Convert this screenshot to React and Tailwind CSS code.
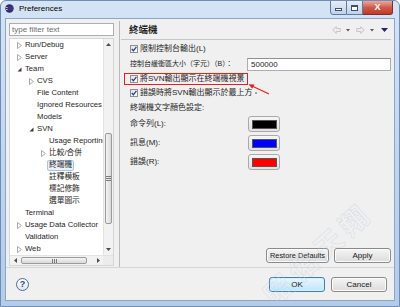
import React from "react";

const font = "font-['Liberation_Sans','Noto_Sans_CJK_TC',sans-serif]";

const tree = [
    { label: "Run/Debug", level: 0, arrow: "closed" },
    { label: "Server", level: 0, arrow: "closed" },
    { label: "Team", level: 0, arrow: "open" },
    { label: "CVS", level: 1, arrow: "closed" },
    { label: "File Content", level: 1 },
    { label: "Ignored Resources", level: 1 },
    { label: "Models", level: 1 },
    { label: "SVN", level: 1, arrow: "open" },
    { label: "Usage Reporting", level: 2 },
    { label: "比較/合併", level: 2, arrow: "closed" },
    { label: "終端機", level: 2, selected: true },
    { label: "註釋模板", level: 2 },
    { label: "標記修飾", level: 2 },
    { label: "選單圖示", level: 2 },
    { label: "Terminal", level: 0 },
    { label: "Usage Data Collector", level: 0, arrow: "closed" },
    { label: "Validation", level: 0 },
    { label: "Web", level: 0, arrow: "closed" }
];

const indent = ["pl-[7px]", "pl-[19px]", "pl-[31px]"];

function Arrow({ type }) {
    if (type === "closed") {
        return (
            <svg width="5" height="7" viewBox="0 0 5 7">
                <path d="M0.5 0.5 L4.5 3.5 L0.5 6.5 Z" fill="none" stroke="#a9a9a9" strokeWidth="1" />
            </svg>
        );
    }
    if (type === "open") {
        return (
            <svg width="5" height="5" viewBox="0 0 5 5">
                <path d="M4.5 0.5 L4.5 4.5 L0.5 4.5 Z" fill="#3a3a3a" />
            </svg>
        );
    }
    return null;
}

function Checkbox() {
    return (
        <span className="flex h-[8px] w-[8px] shrink-0 items-center justify-center border border-[#8e8f8f] bg-gradient-to-br from-[#e4e4e4] to-[#fbfbfb]">
            <svg width="6" height="6" viewBox="0 0 6 6">
                <path d="M0.8 3 L2.4 4.8 L5.4 0.8" fill="none" stroke="#21428a" strokeWidth="1.3" />
            </svg>
        </span>
    );
}

function WinButton({ children, primary }) {
    return (
        <div
            className={`flex h-[15px] items-center justify-center whitespace-nowrap rounded-[3px] border text-[#1a1a1a] ${
                primary
                    ? "border-[#3c7fb1] bg-gradient-to-b from-[#eaf6fd] to-[#bee6fd] shadow-[inset_0_0_0_1px_#d9f0fc]"
                    : "border-[#8a8a8a] bg-gradient-to-b from-[#f5f5f5] to-[#dcdcdc] shadow-[inset_0_0_0_1px_#fcfcfc]"
            }`}
        >
            {children}
        </div>
    );
}

function ColorButton({ swatch }) {
    return (
        <div className="flex h-[16px] w-[32px] items-center justify-center rounded-[3px] border border-[#a9a9a9] bg-gradient-to-b from-[#f6f6f6] to-[#e1e1e1]">
            <div className={`h-[9px] w-[25px] border border-[#555] ${swatch}`} />
        </div>
    );
}

function TreeRow({ item }) {
    return (
        <div className={`flex h-[12px] items-center whitespace-nowrap ${indent[item.level]}`}>
            <span className="flex w-[8px] shrink-0 items-center">
                <Arrow type={item.arrow} />
            </span>
            {item.selected ? (
                <span className="-ml-[2px] flex h-[11px] items-center rounded-[2px] border border-[#a6c3e4] bg-[#eaf2fb] px-[1px]">
                    {item.label}
                </span>
            ) : (
                <span>{item.label}</span>
            )}
        </div>
    );
}

function App() {
    return (
        <div className={`relative flex h-[307px] w-[400px] flex-col overflow-hidden rounded-t-[6px] border border-[#6f8db4] bg-gradient-to-b from-[#d4e4f5] via-[#c2d6ee] to-[#b4cce8] ${font}`}>

            {/* title bar */}
            <div className="flex h-[17px] shrink-0 items-start">
                <svg className="ml-[4px] mt-[3px]" width="9" height="9" viewBox="0 0 9 9">
                    <circle cx="4.5" cy="4.5" r="4.2" fill="#2f2a63" />
                    <rect x="1" y="3" width="7" height="0.8" fill="#e8e6f5" />
                    <rect x="1" y="5" width="7" height="0.8" fill="#e8e6f5" />
                    <circle cx="5.3" cy="4.5" r="2.8" fill="#3b347a" />
                </svg>
                <span className="ml-[5px] mt-[3px] text-[8px] leading-[10px] text-black">Preferences</span>
                <div className="-mt-[1px] ml-auto mr-[6px] flex h-[15px]">
                    <div className="flex w-[17px] items-end justify-center rounded-bl-[3px] border border-[#5d7aa2] bg-gradient-to-b from-[#e6eef8] to-[#bfd2ea] pb-[3px]">
                        <div className="h-[3px] w-[7px] border border-[#3c4f6c] bg-white" />
                    </div>
                    <div className="flex w-[16px] items-center justify-center border-y border-r border-[#5d7aa2] bg-gradient-to-b from-[#e6eef8] to-[#bfd2ea]">
                        <div className="h-[6px] w-[7px] border border-[#3c4f6c] border-t-2 bg-white" />
                    </div>
                    <div className="flex w-[30px] items-center justify-center rounded-br-[3px] border-y border-r border-[#7a2f2a] bg-gradient-to-b from-[#e9a99c] via-[#d05a48] to-[#c0392b] text-[9px] font-bold leading-none text-white">
                        X
                    </div>
                </div>
            </div>

            {/* client area */}
            <div className="mx-[4px] mb-[5px] flex flex-1 flex-col border border-[#8aa6c9] bg-[#f0f0f0] text-[8px] text-[#1e1e1e]">

                <div className="flex h-[248px] shrink-0">

                    {/* left column */}
                    <div className="flex w-[108px] shrink-0 flex-col pb-[2px] pl-[3px] pt-[4px]">
                        <div className="flex h-[13px] items-center border border-[#abadb3] bg-white pl-[2px] text-[8px] text-[#6d6d6d]">
                            type filter text
                        </div>
                        <div className="mt-[2px] flex flex-1 flex-col border border-[#d6d6d6] bg-white">
                            <div className="flex flex-1">
                                <div className="flex-1 overflow-hidden text-[7.7px] text-[#1e1e1e]">
                                    {tree.map((item) => (
                                        <TreeRow key={item.label} item={item} />
                                    ))}
                                </div>
                                <div className="flex w-[10px] flex-col border-l border-[#e3e3e3] bg-[#f2f2f2]">
                                    <div className="flex h-[11px] items-center justify-center">
                                        <svg width="5" height="3" viewBox="0 0 5 3"><path d="M0 3 L2.5 0 L5 3 Z" fill="#4d4d4d" /></svg>
                                    </div>
                                    <div className="h-[83px]" />
                                    <div className="mx-[1px] flex h-[91px] items-center justify-center rounded-[2px] border border-[#9a9a9a] bg-gradient-to-r from-[#f4f4f4] to-[#d9d9d9]">
                                        <div className="flex flex-col gap-[1px]">
                                            <div className="h-[1px] w-[5px] bg-[#7a7a7a]" />
                                            <div className="h-[1px] w-[5px] bg-[#7a7a7a]" />
                                            <div className="h-[1px] w-[5px] bg-[#7a7a7a]" />
                                        </div>
                                    </div>
                                    <div className="flex-1" />
                                    <div className="flex h-[11px] items-center justify-center">
                                        <svg width="5" height="3" viewBox="0 0 5 3"><path d="M0 0 L2.5 3 L5 0 Z" fill="#4d4d4d" /></svg>
                                    </div>
                                </div>
                            </div>
                            <div className="flex h-[10px] border-t border-[#e3e3e3] bg-[#f2f2f2]">
                                <div className="flex w-[10px] items-center justify-center">
                                    <svg width="3" height="5" viewBox="0 0 3 5"><path d="M3 0 L0 2.5 L3 5 Z" fill="#4d4d4d" /></svg>
                                </div>
                                <div className="my-[1px] ml-[1px] flex w-[66px] items-center justify-center rounded-[2px] border border-[#9a9a9a] bg-gradient-to-b from-[#f4f4f4] to-[#d9d9d9]">
                                    <div className="flex gap-[1px]">
                                        <div className="h-[4px] w-[1px] bg-[#7a7a7a]" />
                                        <div className="h-[4px] w-[1px] bg-[#7a7a7a]" />
                                        <div className="h-[4px] w-[1px] bg-[#7a7a7a]" />
                                    </div>
                                </div>
                                <div className="flex-1" />
                                <div className="flex w-[10px] items-center justify-center">
                                    <svg width="3" height="5" viewBox="0 0 3 5"><path d="M0 0 L3 2.5 L0 5 Z" fill="#4d4d4d" /></svg>
                                </div>
                                <div className="w-[10px] bg-[#ececec]" />
                            </div>
                        </div>
                    </div>

                    {/* sash */}
                    <div className="flex w-[7px] shrink-0 justify-end pr-[1px]">
                        <div className="mt-[2px] w-[1px] bg-[#b9b9b9]" />
                    </div>

                    {/* right column */}
                    <div className="flex flex-1 flex-col pr-[3px] pt-[2px]">

                        <div className="flex h-[19px] shrink-0 items-center border-b border-[#c6c6c6] pl-[8px]">
                            <span className="text-[9.5px] font-bold text-[#1e1e1e]">終端機</span>
                            <div className="ml-auto flex items-center pr-[3px]">
                                <svg width="9" height="8" viewBox="0 0 9 8">
                                    <path d="M0.7 4 L4.3 0.7 L4.3 2.5 L8.3 2.5 L8.3 5.5 L4.3 5.5 L4.3 7.3 Z" fill="#ededed" stroke="#bdbdbd" strokeWidth="0.8" />
                                </svg>
                                <svg className="ml-[5px]" width="4" height="3" viewBox="0 0 4 3"><path d="M0 0 L4 0 L2 2.5 Z" fill="#555" /></svg>
                                <svg className="ml-[6px]" width="9" height="8" viewBox="0 0 9 8">
                                    <path d="M8.3 4 L4.7 0.7 L4.7 2.5 L0.7 2.5 L0.7 5.5 L4.7 5.5 L4.7 7.3 Z" fill="#ededed" stroke="#bdbdbd" strokeWidth="0.8" />
                                </svg>
                                <svg className="ml-[5px]" width="4" height="3" viewBox="0 0 4 3"><path d="M0 0 L4 0 L2 2.5 Z" fill="#555" /></svg>
                                <svg className="ml-[7px]" width="7" height="4" viewBox="0 0 7 4"><path d="M0 0 L7 0 L3.5 4 Z" fill="#1d2b5e" /></svg>
                            </div>
                        </div>

                        <div className="flex flex-1 flex-col pl-[9px]">
                            <div className="mt-[3px] flex h-[12px] items-center gap-[2px]">
                                <Checkbox />
                                <span>限制控制台輸出(L)</span>
                            </div>

                            <div className="mt-[3px] flex h-[13px] items-center">
                                <span className="w-[117px] shrink-0 whitespace-nowrap text-[7px]">控制台緩衝區大小（字元）（B）：</span>
                                <div className="flex h-[13px] flex-1 items-center border border-[#abadb3] border-t-[#8e8f8f] bg-white pl-[3px]">
                                    500000
                                </div>
                            </div>

                            <div className="-ml-[6px] mt-[2px] flex h-[12px] items-center gap-[2px] self-start border border-[#e3221b] pl-[5px] pr-[3px]">
                                <Checkbox />
                                <span>將SVN輸出顯示在終端機視景</span>
                            </div>

                            <div className="mt-[2px] flex h-[12px] items-center gap-[2px]">
                                <Checkbox />
                                <span>錯誤時將SVN輸出顯示於最上方</span>
                                <span className="ml-[1px] h-[2px] w-[2px] rounded-full bg-[#8a8a8a]" />
                            </div>

                            <div className="mt-[3px] flex h-[12px] items-center">終端機文字顏色設定:</div>

                            <div className="mt-[2px] flex h-[16px] items-center">
                                <span className="w-[118px] shrink-0">命令列(L):</span>
                                <ColorButton swatch="bg-black" />
                            </div>
                            <div className="mt-[3px] flex h-[16px] items-center">
                                <span className="w-[118px] shrink-0">訊息(M):</span>
                                <ColorButton swatch="bg-[#0000ff]" />
                            </div>
                            <div className="mt-[3px] flex h-[16px] items-center">
                                <span className="w-[118px] shrink-0">錯誤(R):</span>
                                <ColorButton swatch="bg-[#ff0000]" />
                            </div>

                            <div className="flex-1" />

                            <div className="mb-[4px] flex justify-end gap-[5px]">
                                <div className="w-[63px] text-[7.4px]"><WinButton>Restore Defaults</WinButton></div>
                                <div className="w-[57px]"><WinButton>Apply</WinButton></div>
                            </div>
                        </div>
                    </div>
                </div>

                {/* footer */}
                <div className="flex h-[33px] shrink-0 items-center border-t border-[#d7d7d7] pl-[10px] pr-[7px]">
                    <div className="flex h-[13px] w-[13px] items-center justify-center rounded-full border border-[#4f6d95] bg-gradient-to-b from-white to-[#dfe8f3] text-[9px] font-bold leading-none text-[#2d4a78]">
                        ?
                    </div>
                    <div className="ml-auto flex gap-[6px] pt-[1px]">
                        <div className="w-[56px]"><WinButton primary>OK</WinButton></div>
                        <div className="w-[56px]"><WinButton>Cancel</WinButton></div>
                    </div>
                </div>
            </div>

            {/* annotation arrow */}
            <svg className="pointer-events-none absolute left-[244px] top-[80px]" width="28" height="16" viewBox="0 0 28 16">
                <path d="M24 13 L6 4.5" stroke="#e3221b" strokeWidth="1.3" />
                <path d="M3.5 3.2 L9.5 3.6 L7.2 7.8 Z" fill="#e3221b" />
            </svg>

            {/* watermark */}
            <div className="pointer-events-none absolute left-[236px] top-[230px] w-[160px] -rotate-[42deg] text-center font-['Noto_Sans_CJK_TC',sans-serif] text-[28px] font-bold tracking-[6px] text-transparent opacity-60 [-webkit-text-stroke:0.5px_#c3cfdc]">
                昭佑天翔
            </div>
        </div>
    );
}

export default App;
